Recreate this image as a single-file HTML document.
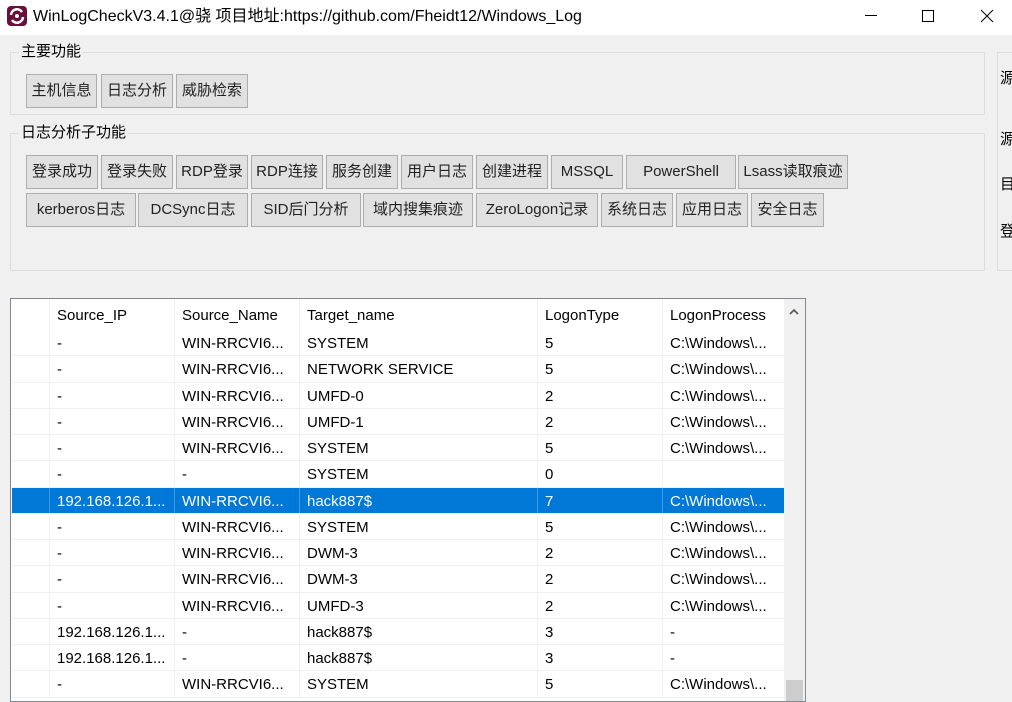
<!DOCTYPE html>
<html><head><meta charset="utf-8"><style>
*{margin:0;padding:0;box-sizing:border-box}
body{width:1012px;height:692px;overflow:hidden;background:#f0f0f0;font-family:"Liberation Sans","Noto Sans CJK SC",sans-serif;font-size:15px;color:#000;position:relative}
.a{position:absolute}
.title{left:0;top:0;width:1012px;height:35px;background:#fff}
.grp{border:1px solid #dcdcdc}
.lbl{background:#f0f0f0;padding:0 2px;font-size:15px;line-height:18px}
.btn{position:absolute;background:#e1e1e1;border:1px solid #adadad;height:34px;line-height:32px;text-align:center;font-size:15px;white-space:nowrap;color:#222}
.tbl{left:10px;top:298px;width:796px;height:404px;background:#fff;border:1px solid #828790;overflow:hidden}
.row{position:absolute;left:1px;width:772px;height:26.25px;border-bottom:1px solid #f0f0f0}
.c{position:absolute;top:0;height:100%;line-height:27px;padding-left:7px;border-left:1px solid #f0f0f0;white-space:nowrap;overflow:hidden}
.sel{background:#0078d7;color:#fff}
.sel .c{border-left-color:#3d9ae3}
</style></head><body>
<div class="a title"></div>
<svg class="a" style="left:7px;top:6px" width="20" height="20" viewBox="0 0 20 20"><rect x="0" y="0" width="20" height="20" rx="4" fill="#6b0f3a"/><path d="M4 9 A6 6 0 0 1 15 6" stroke="#fff" stroke-width="2.5" fill="none"/><path d="M16 11 A6 6 0 0 1 5 14" stroke="#fff" stroke-width="2.5" fill="none"/><circle cx="10" cy="10" r="2" fill="#fff"/></svg>
<div class="a" style="left:33px;top:7px;font-size:16px;line-height:20px">WinLogCheckV3.4.1@骁 项目地址:https://github.com/Fheidt12/Windows_Log</div>
<div class="a" style="left:865px;top:15px;width:12px;height:1px;background:#000"></div>
<div class="a" style="left:922px;top:10px;width:12px;height:12px;border:1px solid #000"></div>
<svg class="a" style="left:980px;top:9px" width="14" height="14"><path d="M1 1L13 13M13 1L1 13" stroke="#000" stroke-width="1"/></svg>

<div class="a grp" style="left:10px;top:52px;width:975px;height:63px"></div>
<div class="a lbl" style="left:19px;top:43px">主要功能</div>
<div class="btn" style="left:26px;top:74px;width:71px">主机信息</div>
<div class="btn" style="left:101px;top:74px;width:72px">日志分析</div>
<div class="btn" style="left:176px;top:74px;width:72px">威胁检索</div>

<div class="a grp" style="left:10px;top:133px;width:975px;height:138px"></div>
<div class="a lbl" style="left:19px;top:124px">日志分析子功能</div>
<div class="btn" style="left:26px;top:155px;width:72px">登录成功</div>
<div class="btn" style="left:101px;top:155px;width:72px">登录失败</div>
<div class="btn" style="left:176px;top:155px;width:72px">RDP登录</div>
<div class="btn" style="left:251px;top:155px;width:72px">RDP连接</div>
<div class="btn" style="left:326px;top:155px;width:72px">服务创建</div>
<div class="btn" style="left:401px;top:155px;width:72px">用户日志</div>
<div class="btn" style="left:476px;top:155px;width:72px">创建进程</div>
<div class="btn" style="left:551px;top:155px;width:72px">MSSQL</div>
<div class="btn" style="left:626px;top:155px;width:110px">PowerShell</div>
<div class="btn" style="left:738px;top:155px;width:110px">Lsass读取痕迹</div>
<div class="btn" style="left:26px;top:193px;width:110px">kerberos日志</div>
<div class="btn" style="left:138px;top:193px;width:110px">DCSync日志</div>
<div class="btn" style="left:251px;top:193px;width:110px">SID后门分析</div>
<div class="btn" style="left:363px;top:193px;width:110px">域内搜集痕迹</div>
<div class="btn" style="left:476px;top:193px;width:122px">ZeroLogon记录</div>
<div class="btn" style="left:601px;top:193px;width:72px">系统日志</div>
<div class="btn" style="left:676px;top:193px;width:72px">应用日志</div>
<div class="btn" style="left:751px;top:193px;width:73px">安全日志</div>

<div class="a grp" style="left:997px;top:52px;width:30px;height:219px"></div>
<div class="a" style="left:1000px;top:67px">源</div>
<div class="a" style="left:1000px;top:128px">源</div>
<div class="a" style="left:1000px;top:173px">目</div>
<div class="a" style="left:1000px;top:220px">登</div>

<div class="a tbl">
<div class="row" style="top:0;height:31px;border:none">
<div class="c" style="left:0;width:37px;border:none"></div>
<div class="c" style="left:37px;width:125px;line-height:33px">Source_IP</div>
<div class="c" style="left:162px;width:125px;line-height:33px">Source_Name</div>
<div class="c" style="left:287px;width:238px;line-height:33px">Target_name</div>
<div class="c" style="left:525px;width:125px;line-height:33px">LogonType</div>
<div class="c" style="left:650px;width:122px;line-height:33px">LogonProcess</div>
</div>
<div class="a" style="left:773px;top:0;width:21px;height:404px;background:#f0f0f0"></div>
<svg class="a" style="left:778px;top:9px" width="10" height="8"><path d="M1 6L5 2L9 6" stroke="#555" stroke-width="1.6" fill="none"/></svg>
<div class="a" style="left:775px;top:381px;width:17px;height:24px;background:#cdcdcd"></div>
<div id="rows"></div>
</div>
<script>
var d=[["-","WIN-RRCVI6...","SYSTEM","5","C:\\Windows\\..."],["-","WIN-RRCVI6...","NETWORK SERVICE","5","C:\\Windows\\..."],["-","WIN-RRCVI6...","UMFD-0","2","C:\\Windows\\..."],["-","WIN-RRCVI6...","UMFD-1","2","C:\\Windows\\..."],["-","WIN-RRCVI6...","SYSTEM","5","C:\\Windows\\..."],["-","-","SYSTEM","0",""],["192.168.126.1...","WIN-RRCVI6...","hack887$","7","C:\\Windows\\..."],["-","WIN-RRCVI6...","SYSTEM","5","C:\\Windows\\..."],["-","WIN-RRCVI6...","DWM-3","2","C:\\Windows\\..."],["-","WIN-RRCVI6...","DWM-3","2","C:\\Windows\\..."],["-","WIN-RRCVI6...","UMFD-3","2","C:\\Windows\\..."],["192.168.126.1...","-","hack887$","3","-"],["192.168.126.1...","-","hack887$","3","-"],["-","WIN-RRCVI6...","SYSTEM","5","C:\\Windows\\..."]];
var L=[37,162,287,525,650],W=[125,125,238,125,122],h="";
d.forEach(function(r,i){h+='<div class="row'+(i==6?' sel':'')+'" style="top:'+(31+i*26.25)+'px"><div class="c" style="left:0;width:37px;border:none"></div>';r.forEach(function(t,j){h+='<div class="c" style="left:'+L[j]+'px;width:'+W[j]+'px">'+t+'</div>'});h+='</div>'});
document.getElementById('rows').innerHTML=h;
</script>
</body></html>
